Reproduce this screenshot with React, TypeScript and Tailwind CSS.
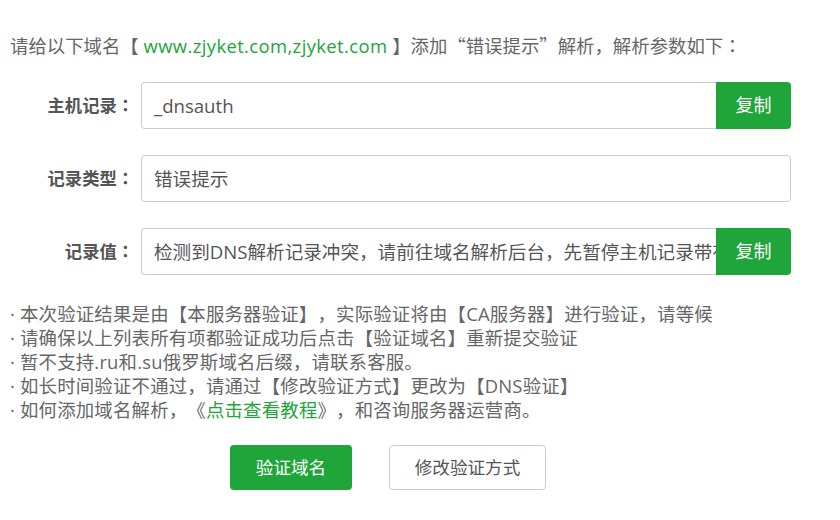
import React from "react";

const font = { fontFamily: '"Open Sans", "Noto Sans CJK SC", sans-serif' };
const cjk = { fontFamily: '"Noto Sans CJK SC", sans-serif' };
const colon = { fontFamily: '"Noto Sans CJK TC", sans-serif' };

const Row = ({ label, value, copy }: { label: string; value: string; copy?: boolean }) => (
  <div className="flex items-center">
    <div className="w-[134px] text-right text-[17.3px] font-bold text-[#555]">
      {label}
      <span style={colon}>：</span>
    </div>
    <div className="ml-[7px] flex h-[47px] w-[650px]">
      <div
        className={
          "flex-1 flex items-center overflow-hidden whitespace-nowrap border border-[#ccc] pl-3 text-[18.6px] text-[#555] " +
          (copy ? "rounded-l-[4px] border-r-0" : "rounded-[4px]")
        }
      >
        {value}
      </div>
      {copy && (
        <button className="w-[75px] shrink-0 rounded-r-[4px] bg-[#20a53a] text-[18px] text-white">复制</button>
      )}
    </div>
  </div>
);

export default function App() {
  return (
    <div className="w-[840px] h-[520px] bg-white text-[#666] [text-spacing-trim:space-all]" style={font}>
      <div className="pl-[10px] pt-[33px] text-[18.4px] leading-[24px]">
        请给以下域名【 <span className="text-[#20a53a] tracking-[0.4px]">www.zjyket.com,zjyket.com</span> 】添加<span style={cjk}>“错误提示”</span>解析，解析参数如下<span style={colon}>：</span>
      </div>

      <div className="mt-[24px] flex flex-col gap-[26px]">
        <Row label="主机记录" value="_dnsauth" copy />
        <Row label="记录类型" value="错误提示" />
        <Row label="记录值" value="检测到DNS解析记录冲突，请前往域名解析后台，先暂停主机记录带有_dnsauth的解析记录" copy />
      </div>

      <ul className="mt-[27px] pl-[10px] text-[18.4px] leading-[24px] tracking-[0.2px]">
        <li>· 本次验证结果是由【本服务器验证】，实际验证将由【CA服务器】进行验证，请等候</li>
        <li>· 请确保以上列表所有项都验证成功后点击【验证域名】重新提交验证</li>
        <li>· 暂不支持.ru和.su俄罗斯域名后缀，请联系客服。</li>
        <li>· 如长时间验证不通过，请通过【修改验证方式】更改为【DNS验证】</li>
        <li>
          · 如何添加域名解析，《<span className="text-[#20a53a]">点击查看教程</span>》，和咨询服务器运营商。
        </li>
      </ul>

      <div className="mt-[23px] flex pl-[230px] gap-[37px]">
        <button className="h-[45px] w-[122px] rounded-[4px] bg-[#20a53a] text-[17.6px] text-white">验证域名</button>
        <button className="h-[45px] w-[157px] rounded-[4px] border border-[#ccc] bg-white text-[17.6px] text-[#555]">
          修改验证方式
        </button>
      </div>
    </div>
  );
}
